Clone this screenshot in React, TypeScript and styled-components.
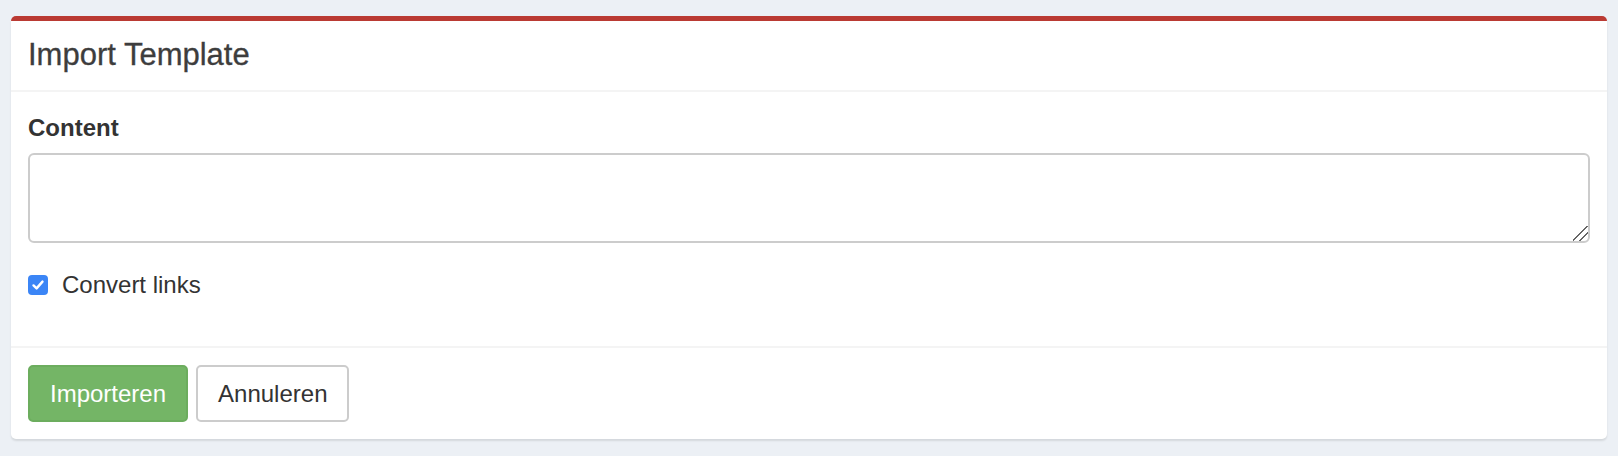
import React, { FunctionComponent } from 'react'
import styled, { createGlobalStyle } from 'styled-components'

const GlobalStyle = createGlobalStyle`
  html, body {
    margin: 0;
    padding: 0;
    background-color: #ecf0f5;
    font-family: 'Liberation Sans', Arial, Helvetica, sans-serif;
    color: #333;
  }
  * {
    box-sizing: border-box;
  }
`

const Page = styled.div`
  padding: 16px 11px 0;
  height: 456px;
`

const Box = styled.div`
  background-color: #fff;
  border-top: 5px solid #ba3a33;
  border-radius: 5px;
  box-shadow: 0 2px 2px rgba(0, 0, 0, 0.1);
`

const BoxHeader = styled.div`
  padding: 16px 17px 18px;
  border-bottom: 2px solid #f4f4f4;
`

const BoxTitle = styled.h3`
  margin: 0;
  font-size: 31px;
  line-height: 35px;
  font-weight: 400;
  color: #3d3d3d;
  -webkit-text-stroke: 0.3px #3d3d3d;
`

const BoxBody = styled.div`
  padding: 19px 17px 17px;
`

const FormGroup = styled.div`
  margin-bottom: 25px;
`

const Label = styled.label`
  display: block;
  font-size: 24px;
  line-height: 34px;
  font-weight: 700;
  color: #333;
  margin-bottom: 8px;
`

const TextArea = styled.textarea`
  display: block;
  width: 100%;
  height: 90px;
  border: 2px solid #ccc;
  border-radius: 6px;
  padding: 10px 20px;
  font-family: inherit;
  font-size: 24px;
  color: #555;
  resize: vertical;
  outline: none;

  &::-webkit-resizer {
    background: linear-gradient(
      135deg,
      transparent 0 45%,
      #666 45% 53%,
      transparent 53% 68%,
      #666 68% 76%,
      transparent 76%
    );
  }
`

const CheckRow = styled.label`
  display: flex;
  align-items: center;
  gap: 14px;
  height: 34px;
  margin-bottom: 27px;
  font-size: 24px;
  line-height: 34px;
  color: #333;
  cursor: pointer;
`

const CheckMark = styled.span`
  display: inline-flex;
  align-items: center;
  justify-content: center;
  width: 20px;
  height: 20px;
  border-radius: 4px;
  background-color: #3b85f6;
`

const BoxFooter = styled.div`
  display: flex;
  gap: 8px;
  padding: 17px;
  border-top: 2px solid #f4f4f4;
`

const Button = styled.button<{ primary?: boolean }>`
  display: inline-flex;
  align-items: center;
  justify-content: center;
  height: 57px;
  padding: 0 20px;
  font-family: inherit;
  font-size: 24px;
  border-radius: 5px;
  border: 2px solid ${({ primary }) => (primary ? '#6cad5e' : '#ccc')};
  background-color: ${({ primary }) => (primary ? '#74b566' : '#fff')};
  color: ${({ primary }) => (primary ? '#fff' : '#333')};
  cursor: pointer;
`

const App: FunctionComponent = () => {
  return (
    <Page>
      <GlobalStyle />
      <Box>
        <BoxHeader>
          <BoxTitle>Import Template</BoxTitle>
        </BoxHeader>
        <BoxBody>
          <FormGroup>
            <Label htmlFor="content">Content</Label>
            <TextArea id="content" />
          </FormGroup>
          <CheckRow>
            <CheckMark>
              <svg width="14" height="14" viewBox="0 0 14 14">
                <path
                  d="M2.5 7.4 L5.6 10.4 L11.5 3.6"
                  fill="none"
                  stroke="#fff"
                  strokeWidth="2.4"
                  strokeLinecap="round"
                  strokeLinejoin="round"
                />
              </svg>
            </CheckMark>
            Convert links
          </CheckRow>
        </BoxBody>
        <BoxFooter>
          <Button primary>Importeren</Button>
          <Button>Annuleren</Button>
        </BoxFooter>
      </Box>
    </Page>
  )
}

export default App
